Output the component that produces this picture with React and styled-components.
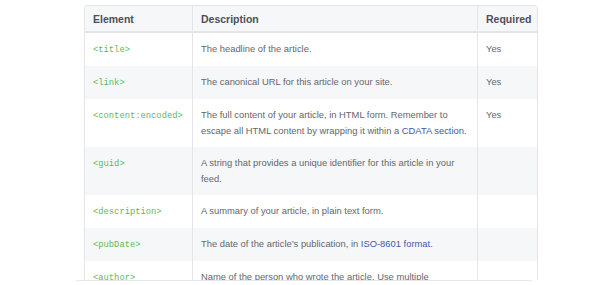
import React from "react";
import styled, { createGlobalStyle } from "styled-components";

const Global = createGlobalStyle`
  html, body { margin: 0; padding: 0; background: #fff; }
  body { font-family: "Liberation Sans", Arial, sans-serif; overflow: hidden; }
`;

const Page = styled.div`
  padding: 5px 0 0 84px;
  width: 600px;
  height: 285px;
  box-sizing: border-box;
  overflow: hidden;
`;

const Viewport = styled.div`
  height: 275px;
  overflow: hidden;
`;

const Table = styled.table`
  border-collapse: separate;
  border-spacing: 0;
  width: 452px;
  table-layout: fixed;
  border: 1px solid #e3e5e9;
  border-radius: 3px;
`;

const Th = styled.th`
  text-align: left;
  font-size: 10.5px;
  font-weight: bold;
  color: #4c5058;
  background: #f6f7f9;
  height: 27px;
  padding: 1px 8px 0;
  border-bottom: 2px solid #e3e5e9;
  border-left: ${(p) => (p.$first ? "none" : "1px solid #e3e5e9")};
  width: ${(p) => p.$w}px;
  box-sizing: border-box;
`;

const Row = styled.tr`
  background: ${(p) => (p.$alt ? "#f6f7f9" : "#fff")};
`;

const Td = styled.td`
  vertical-align: top;
  padding: 8px 4px 8px 8px;
  font-size: 9.4px;
  line-height: 16px;
  color: #63676e;
  border-left: ${(p) => (p.$first ? "none" : "1px solid #e3e5e9")};
`;

const Code = styled.code`
  font-family: "Liberation Mono", "Courier New", monospace;
  font-size: 8.8px;
  color: #5cba5c;
`;

const Link = styled.a`
  color: #3f5aa8;
  text-decoration: none;
`;

const BottomLine = styled.div`
  margin-left: -8px;
  width: 456px;
  height: 1px;
  background: #e6e8eb;
`;

const rows = [
  { el: "<title>", desc: "The headline of the article.", req: "Yes" },
  { el: "<link>", desc: "The canonical URL for this article on your site.", req: "Yes" },
  {
    el: "<content:encoded>",
    desc: (
      <>
        The full content of your article, in HTML form. Remember to escape all HTML content by wrapping it within a{" "}
        <Link>CDATA section</Link>.
      </>
    ),
    req: "Yes",
  },
  { el: "<guid>", desc: "A string that provides a unique identifier for this article in your feed.", req: "" },
  { el: "<description>", desc: "A summary of your article, in plain text form.", req: "" },
  {
    el: "<pubDate>",
    desc: (
      <>
        The date of the article’s publication, in <Link>ISO-8601 format</Link>.
      </>
    ),
    req: "",
  },
  {
    el: "<author>",
    desc: (
      <>
        Name of the person who wrote the article. Use multiple <Code>{"<author>"}</Code> elements for multiple authors.
      </>
    ),
    req: "",
  },
];

export default function App() {
  return (
    <Page>
      <Global />
      <Viewport>
        <Table>
          <thead>
            <tr>
              <Th $first $w={107}>Element</Th>
              <Th $w={285}>Description</Th>
              <Th $w={60}>Required</Th>
            </tr>
          </thead>
          <tbody>
            {rows.map((r, i) => (
              <Row key={i} $alt={i % 2 === 1}>
                <Td $first>
                  <Code>{r.el}</Code>
                </Td>
                <Td>{r.desc}</Td>
                <Td>{r.req}</Td>
              </Row>
            ))}
          </tbody>
        </Table>
      </Viewport>
      <BottomLine />
    </Page>
  );
}
